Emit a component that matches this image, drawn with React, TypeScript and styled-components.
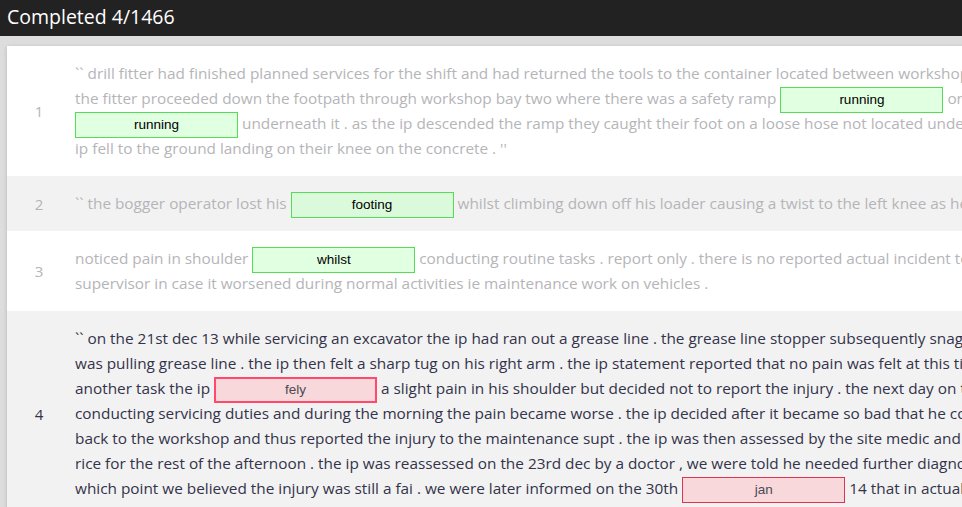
import React, { FC } from "react";
import styled, { createGlobalStyle } from "styled-components";

const GlobalStyle = createGlobalStyle`
  html, body {
    margin: 0;
    padding: 0;
    overflow: hidden;
    background: #dddddd;
    font-family: "Open Sans", "Liberation Sans", sans-serif;
  }
`;

type Segment = string | { answer: string; status: "ok" | "bad"; thick?: boolean };

interface IRow {
  index: number;
  done: boolean;
  lines: Segment[][];
}

const rows: IRow[] = [
  {
    index: 1,
    done: true,
    lines: [
      [
        "`` drill fitter had finished planned services for the shift and had returned the tools to the container located between workshop one and workshop two .",
      ],
      [
        "the fitter proceeded down the footpath through workshop bay two where there was a safety ramp ",
        { answer: "running", status: "ok" },
        " on the footpath with a hose",
      ],
      [
        { answer: "running", status: "ok" },
        " underneath it . as the ip descended the ramp they caught their foot on a loose hose not located under the ramp . the",
      ],
      ["ip fell to the ground landing on their knee on the concrete . ''"],
    ],
  },
  {
    index: 2,
    done: true,
    lines: [
      [
        "`` the bogger operator lost his ",
        { answer: "footing", status: "ok" },
        " whilst climbing down off his loader causing a twist to the left knee as he stepped onto the ground . ''",
      ],
    ],
  },
  {
    index: 3,
    done: true,
    lines: [
      [
        "noticed pain in shoulder ",
        { answer: "whilst", status: "ok" },
        " conducting routine tasks . report only . there is no reported actual incident to cause the pain . reported to",
      ],
      ["supervisor in case it worsened during normal activities ie maintenance work on vehicles ."],
    ],
  },
  {
    index: 4,
    done: false,
    lines: [
      [
        "`` on the 21st dec 13 while servicing an excavator the ip had ran out a grease line . the grease line stopper subsequently snagged and the ip",
      ],
      [
        "was pulling grease line . the ip then felt a sharp tug on his right arm . the ip statement reported that no pain was felt at this time and continued with",
      ],
      [
        "another task the ip ",
        { answer: "fely", status: "bad", thick: true },
        " a slight pain in his shoulder but decided not to report the injury . the next day on the 22nd dec the ip was",
      ],
      [
        "conducting servicing duties and during the morning the pain became worse . the ip decided after it became so bad that he could not continue to come",
      ],
      [
        "back to the workshop and thus reported the injury to the maintenance supt . the ip was then assessed by the site medic and given ice and",
      ],
      [
        "rice for the rest of the afternoon . the ip was reassessed on the 23rd dec by a doctor , we were told he needed further diagnosis at",
      ],
      [
        "which point we believed the injury was still a fai . we were later informed on the 30th ",
        { answer: "jan", status: "bad" },
        " 14 that in actual fact the injury",
      ],
    ],
  },
];

const Header = styled.header`
  height: 36px;
  box-sizing: border-box;
  background: #222222;
  color: #ffffff;
  display: flex;
  align-items: center;
  padding: 0 7px 4px;
  font-size: 19.5px;
`;

const Card = styled.main`
  margin: 10px 0 0 7px;
  width: 1400px;
  background: #ffffff;
  box-shadow: 0 1px 4px rgba(0, 0, 0, 0.18);
`;

const RowWrap = styled.div<{ $odd: boolean }>`
  display: flex;
  align-items: center;
  padding: 15px 0;
  background: ${({ $odd }) => ($odd ? "#ffffff" : "#f2f2f2")};
`;

const Num = styled.div<{ $done: boolean }>`
  width: 64px;
  flex: none;
  text-align: center;
  font-size: 15px;
  color: ${({ $done }) => ($done ? "#b5b5b5" : "#333344")};
`;

const Text = styled.div<{ $done: boolean }>`
  padding-left: 4px;
  font-size: 15.35px;
  color: ${({ $done }) => ($done ? "#b5b5b8" : "#33334a")};
`;

const Line = styled.div`
  height: 25px;
  line-height: 25px;
  white-space: pre;
`;

const Answer = styled.span<{ $status: "ok" | "bad"; $thick?: boolean }>`
  display: inline-block;
  box-sizing: border-box;
  width: 163px;
  height: 26px;
  line-height: ${({ $thick }) => ($thick ? "22px" : "24px")};
  vertical-align: middle;
  text-align: center;
  font-family: "Liberation Sans", Arial, sans-serif;
  font-size: 13.5px;
  border: ${({ $status, $thick }) =>
    $status === "ok"
      ? "1px solid #55dd55"
      : $thick
      ? "2px solid #ff4a6e"
      : "1px solid #dc3552"};
  background: ${({ $status }) =>
    $status === "ok" ? "rgba(200, 255, 200, 0.55)" : "#f8d8da"};
  color: ${({ $status }) => ($status === "ok" ? "#000000" : "#4a4a55")};
`;

const Row: FC<{ row: IRow; odd: boolean }> = ({ row, odd }) => (
  <RowWrap $odd={odd}>
    <Num $done={row.done}>{row.index}</Num>
    <Text $done={row.done}>
      {row.lines.map((line, li) => (
        <Line key={li}>
          {line.map((seg, si) =>
            typeof seg === "string" ? (
              <React.Fragment key={si}>{seg}</React.Fragment>
            ) : (
              <Answer key={si} $status={seg.status} $thick={seg.thick}>
                {seg.answer}
              </Answer>
            )
          )}
        </Line>
      ))}
    </Text>
  </RowWrap>
);

export default function App() {
  return (
    <>
      <GlobalStyle />
      <Header>Completed 4/1466</Header>
      <Card>
        {rows.map((row, i) => (
          <Row key={row.index} row={row} odd={i % 2 === 0} />
        ))}
      </Card>
    </>
  );
}
